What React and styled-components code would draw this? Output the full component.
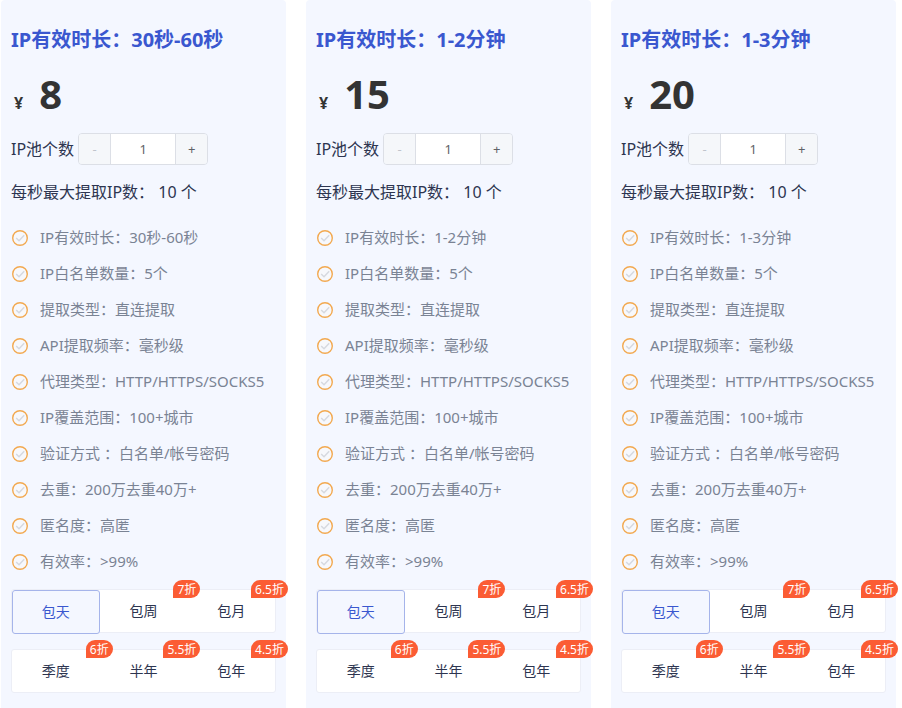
import React, { useState } from "react";
import styled, { createGlobalStyle } from "styled-components";

const GlobalStyle = createGlobalStyle`
  * {
    box-sizing: border-box;
  }
  body {
    margin: 0;
    background: #fff;
    color: #2d3550;
    font-family: "Noto Sans", "Noto Sans CJK SC", sans-serif;
    overflow-x: hidden;
  }
  button, input {
    font-family: inherit;
  }
`;

const planos = [
  { id: 1, tempo: "30秒-60秒", preco: 8 },
  { id: 2, tempo: "1-2分钟", preco: 15 },
  { id: 3, tempo: "1-3分钟", preco: 20 },
];

const periodos = [
  [
    { nome: "包天" },
    { nome: "包周", desconto: "7折" },
    { nome: "包月", desconto: "6.5折" },
  ],
  [
    { nome: "季度", desconto: "6折" },
    { nome: "半年", desconto: "5.5折" },
    { nome: "包年", desconto: "4.5折" },
  ],
];

const itens = [
  "IP白名单数量：5个",
  "提取类型：直连提取",
  "API提取频率：毫秒级",
  "代理类型：HTTP/HTTPS/SOCKS5",
  "IP覆盖范围：100+城市",
  "验证方式 ：白名单/帐号密码",
  "去重：200万去重40万+",
  "匿名度：高匿",
  "有效率：>99%",
];

function Check() {
  return (
    <Icone viewBox="0 0 16 16" aria-hidden="true">
      <circle cx="8" cy="8" r="7.3" fill="#f7f8fc" stroke="#f2a950" strokeWidth="1.4" />
      <path d="M4.2 8 7 10.7 12.2 5.3" fill="none" stroke="#d6d9e0" strokeWidth="1.5" />
    </Icone>
  );
}

function Plano({ plano }) {
  const [quantidade, setQuantidade] = useState(1);
  const [periodo, setPeriodo] = useState("包天");
  const campo = `quantidade-${plano.id}`;

  return (
    <Card>
      <Titulo>IP有效时长：{plano.tempo}</Titulo>
      <Preco>
        <Moeda>¥</Moeda>
        <Valor>{plano.preco}</Valor>
      </Preco>
      <Linha>
        <label htmlFor={campo}>IP池个数</label>
        <Contador>
          <BotaoContador
            type="button"
            aria-label="-1"
            disabled={quantidade <= 1}
            onClick={() => setQuantidade(quantidade - 1)}
          >
            -
          </BotaoContador>
          <Quantidade
            id={campo}
            value={quantidade}
            onChange={(e) => setQuantidade(Number(e.target.value) || 1)}
          />
          <BotaoContador
            type="button"
            aria-label="+1"
            onClick={() => setQuantidade(quantidade + 1)}
          >
            +
          </BotaoContador>
        </Contador>
      </Linha>
      <Limite>每秒最大提取IP数： 10 个</Limite>
      <Lista>
        {["IP有效时长：" + plano.tempo, ...itens].map((item) => (
          <Item key={item}>
            <Check />
            {item}
          </Item>
        ))}
      </Lista>
      <Periodos>
        {periodos.map((linha, i) => (
          <LinhaPeriodo key={i}>
            {linha.map((item) => (
              <BotaoPeriodo
                key={item.nome}
                type="button"
                $ativo={periodo === item.nome}
                onClick={() => setPeriodo(item.nome)}
              >
                {item.nome}
                {item.desconto ? <Desconto>{item.desconto}</Desconto> : null}
              </BotaoPeriodo>
            ))}
          </LinhaPeriodo>
        ))}
      </Periodos>
    </Card>
  );
}

export default function App() {
  return (
    <>
      <GlobalStyle />
      <Planos>
        {planos.map((plano) => (
          <Plano key={plano.id} plano={plano} />
        ))}
      </Planos>
    </>
  );
}

const Planos = styled.main`
  display: grid;
  grid-template-columns: repeat(3, minmax(0, 1fr));
  gap: 20px;
  padding: 0 6px 0 1px;
`;

const Card = styled.section`
  padding: 24px 10px 15px;
  border-radius: 4px 4px 0 0;
  background: #f4f7ff;
`;

const Titulo = styled.h2`
  margin: 0;
  font-size: 20px;
  line-height: 32px;
  font-weight: 700;
  color: #3a57cf;
  white-space: nowrap;
`;

const Preco = styled.div`
  display: flex;
  align-items: baseline;
  gap: 16px;
  margin: 12px 0 13px;
  padding-left: 3px;
  font-weight: 700;
  color: #333;
`;

const Moeda = styled.span`
  font-size: 16px;
  line-height: 20px;
`;

const Valor = styled.span`
  font-size: 40px;
  line-height: 52px;
`;

const Linha = styled.div`
  display: flex;
  align-items: center;
  gap: 4px;
  font-size: 16px;
  line-height: 32px;
  white-space: nowrap;
`;

const Contador = styled.div`
  display: flex;
  width: 130px;
  height: 32px;
  border: 1px solid #dcdfe6;
  border-radius: 4px;
  overflow: hidden;
`;

const BotaoContador = styled.button`
  width: 31px;
  padding: 0;
  border: 0;
  background: #f5f7fa;
  color: #606266;
  font-size: 13px;
  line-height: 30px;
  cursor: pointer;

  &:disabled {
    color: #c0c4cc;
    cursor: not-allowed;
  }
`;

const Quantidade = styled.input`
  flex: 1;
  min-width: 0;
  padding: 0;
  border: solid #dcdfe6;
  border-width: 0 1px;
  background: #fff;
  color: #606266;
  font-size: 13px;
  text-align: center;
  outline: none;
`;

const Limite = styled.p`
  margin: 11px 0 12px;
  font-size: 16px;
  line-height: 32px;
  white-space: nowrap;
`;

const Lista = styled.ul`
  margin: 0 0 9px;
  padding: 0;
  list-style: none;
`;

const Item = styled.li`
  display: flex;
  align-items: center;
  gap: 12px;
  padding: 0 0 2px 1px;
  font-size: 15px;
  line-height: 34px;
  color: #7a8394;
  white-space: nowrap;
`;

const Icone = styled.svg`
  flex: none;
  width: 16px;
  height: 16px;
  margin-top: 2px;
`;

const Periodos = styled.div`
  display: grid;
  gap: 16px;
`;

const LinhaPeriodo = styled.div`
  display: grid;
  grid-template-columns: repeat(3, minmax(0, 1fr));
  height: 44px;
  border: 1px solid #eceef6;
  border-radius: 3px;
  background: #fff;
`;

const BotaoPeriodo = styled.button`
  position: relative;
  height: ${(props) => (props.$ativo ? "44px" : "42px")};
  padding: 0;
  border: ${(props) => (props.$ativo ? "1px solid #a5b4ea" : "0")};
  border-radius: 3px;
  background: ${(props) => (props.$ativo ? "#f4f7ff" : "transparent")};
  color: ${(props) => (props.$ativo ? "#3a57cf" : "#2d3550")};
  font-size: 14px;
  line-height: 42px;
  cursor: pointer;
`;

const Desconto = styled.span`
  position: absolute;
  top: -10px;
  right: -13px;
  padding: 1px 4px 0;
  border-radius: 9px 9px 9px 0;
  background: #fb5c34;
  color: #fff;
  font-size: 12px;
  line-height: 17px;
  white-space: nowrap;
`;
